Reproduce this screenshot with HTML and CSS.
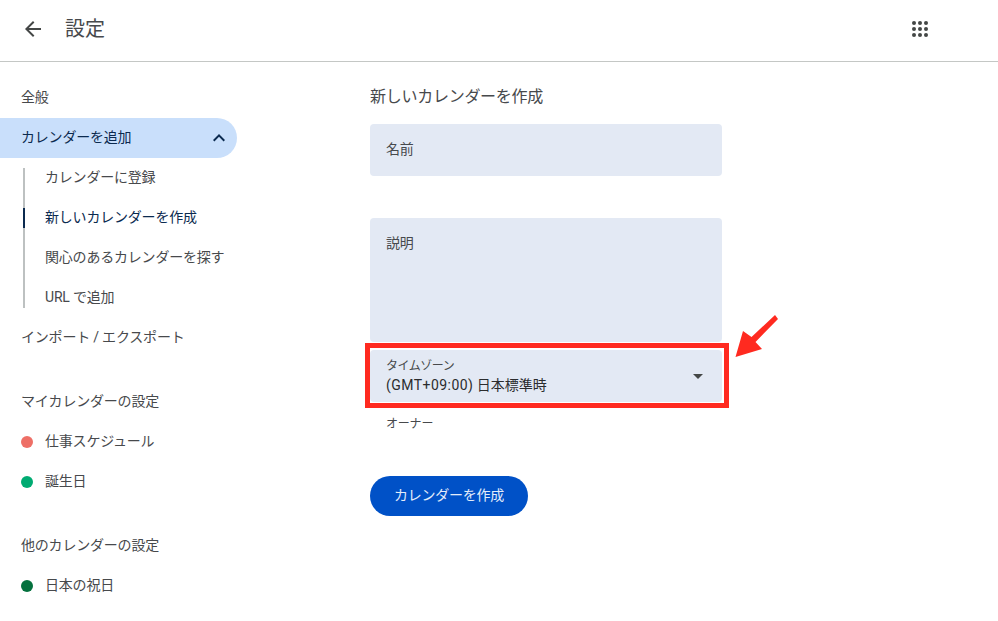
FILE: index.html
```html
<!DOCTYPE html>
<html lang="ja">
<head>
<meta charset="utf-8">
<title>設定</title>
<link rel="stylesheet" href="styles.css">
</head>
<body>
<header class="topbar">
  <svg class="back" viewBox="0 0 24 24" width="24" height="24"><path d="M20 11H7.83l5.59-5.59L12 4l-8 8 8 8 1.41-1.41L7.83 13H20v-2z"/></svg>
  <h1 class="title">設定</h1>
  <svg class="apps" viewBox="0 0 18 18" width="18" height="18"><circle cx="2" cy="2" r="2"/><circle cx="8" cy="2" r="2"/><circle cx="14" cy="2" r="2"/><circle cx="2" cy="8" r="2"/><circle cx="8" cy="8" r="2"/><circle cx="14" cy="8" r="2"/><circle cx="2" cy="14" r="2"/><circle cx="8" cy="14" r="2"/><circle cx="14" cy="14" r="2"/></svg>
</header>
<div class="layout">
  <nav class="sidebar">
    <div class="item">全般</div>
    <div class="item open">カレンダーを追加
      <svg class="chev" viewBox="0 0 24 24" width="24" height="24"><path d="M12 8l-6 6 1.41 1.41L12 10.83l4.59 4.58L18 14z"/></svg>
    </div>
    <div class="subs">
      <div class="sub">カレンダーに登録</div>
      <div class="sub current">新しいカレンダーを作成</div>
      <div class="sub">関心のあるカレンダーを探す</div>
      <div class="sub">URL で追加</div>
    </div>
    <div class="item">インポート / エクスポート</div>
    <div class="item head">マイカレンダーの設定</div>
    <div class="item cal"><span class="dot coral"></span>仕事スケジュール</div>
    <div class="item cal"><span class="dot green"></span>誕生日</div>
    <div class="item head">他のカレンダーの設定</div>
    <div class="item cal"><span class="dot dark"></span>日本の祝日</div>
  </nav>
  <main class="main">
    <h2 class="heading">新しいカレンダーを作成</h2>
    <div class="field name">名前</div>
    <div class="field desc">説明</div>
    <div class="field tz">
      <div class="tz-text">
        <div class="tz-label">タイムゾーン</div>
        <div class="tz-value"><span class="tz-offset">(GMT+09:00)</span> 日本標準時</div>
      </div>
      <span class="caret"></span>
    </div>
    <div class="owner">オーナー</div>
    <button class="create">カレンダーを作成</button>
  </main>
</div>
<div class="mark"></div>
<svg class="arrow" viewBox="0 0 46 46" width="46" height="46"><path d="M1.500 43L9 17 17.500 23 41 1 44 5 21.500 28 28 35z"/></svg>
</body>
</html>
```
FILE: styles.css
```css
* { box-sizing: border-box; }
html, body { height: 100%; }
body {
  margin: 0;
  position: relative;
  overflow: hidden;
  background: #fff;
  color: #47494c;
  font-family: Roboto, "Noto Sans CJK JP", sans-serif;
  font-size: 14px;
  line-height: 20px;
  letter-spacing: -0.2px;
}
.topbar {
  height: 62px;
  display: flex;
  align-items: center;
  padding: 0 57px 3px 21px;
  border-bottom: 1px solid #c4c7c5;
}
.back { fill: #444746; flex: none; }
.title {
  margin: 0 0 0 20px;
  font-size: 20px;
  line-height: 28px;
  font-weight: 400;
  letter-spacing: 0;
  flex: 1;
  color: #47494c;
}
.apps { fill: #444746; flex: none; margin: 2px 11px 0 0; }
.layout { display: flex; }
.sidebar { width: 237px; flex: none; padding-top: 16px; }
.item {
  height: 40px;
  display: flex;
  align-items: center;
  padding: 0 0 2px 21px;
}
.open {
  background: #c9dffb;
  color: #0b2a4f;
  border-radius: 0 20px 20px 0;
  justify-content: space-between;
  padding-right: 6px;
}
.chev { fill: #0b2a4f; margin-top: 2px; }
.subs { margin-left: 23px; position: relative; }
.sub {
  height: 40px;
  display: flex;
  align-items: center;
  padding: 0 0 2px 22px;
  white-space: nowrap;
  position: relative;
}
.sub::before {
  content: "";
  position: absolute;
  left: 0;
  top: 0;
  bottom: 0;
  width: 2px;
  background: #bdc1c1;
}
.sub:first-child::before { top: 10px; }
.sub:last-child::before { bottom: 10px; }
.current { color: #0b2a4f; }
.current::after {
  content: "";
  position: absolute;
  left: 0;
  top: 10px;
  bottom: 10px;
  width: 2px;
  background: #0b2a4f;
}
.head { margin-top: 24px; }
.cal { gap: 12px; }
.dot { width: 12px; height: 12px; border-radius: 50%; flex: none; margin-top: 2px; }
.coral { background: #ee6f66; }
.green { background: #00ab72; }
.dark { background: #04713e; }
.main { margin-left: 133px; width: 352px; padding-top: 22px; }
.heading {
  margin: 0 0 15px;
  font-size: 16px;
  line-height: 25px;
  font-weight: 400;
  letter-spacing: -0.27px;
  color: #47494c;
}
.field {
  background: #e3e9f4;
  border-radius: 4px;
  padding-left: 16px;
  color: #47494c;
}
.name { height: 52px; line-height: 50px; margin-bottom: 42px; }
.desc { height: 124px; padding-top: 15px; line-height: 20px; margin-bottom: 8px; }
.tz {
  height: 52px;
  display: flex;
  align-items: center;
  justify-content: space-between;
  padding-right: 19px;
}
.tz-label { font-size: 12px; line-height: 16px; letter-spacing: -0.5px; }
.tz-value { font-size: 14px; line-height: 20px; letter-spacing: 0; color: #2b2c2e; margin-top: 1px; }
.tz-offset { letter-spacing: 0.45px; }
.caret {
  width: 0;
  height: 0;
  border-left: 5px solid transparent;
  border-right: 5px solid transparent;
  border-top: 5px solid #444746;
}
.owner { font-size: 12px; line-height: 16px; padding-left: 16px; margin-top: 14px; color: #47494c; }
.create {
  margin-top: 44px;
  display: block;
  width: 158px;
  height: 40px;
  border: 0;
  padding: 0 0 2px;
  border-radius: 20px;
  background: #0051c7;
  color: #e3ecfa;
  font: inherit;
  letter-spacing: -0.25px;
}
.mark {
  position: absolute;
  left: 365px;
  top: 343px;
  width: 364px;
  height: 65px;
  border: 5px solid #ff2a20;
}
.arrow { position: absolute; left: 734px; top: 314px; fill: #ff2a20; }
```
